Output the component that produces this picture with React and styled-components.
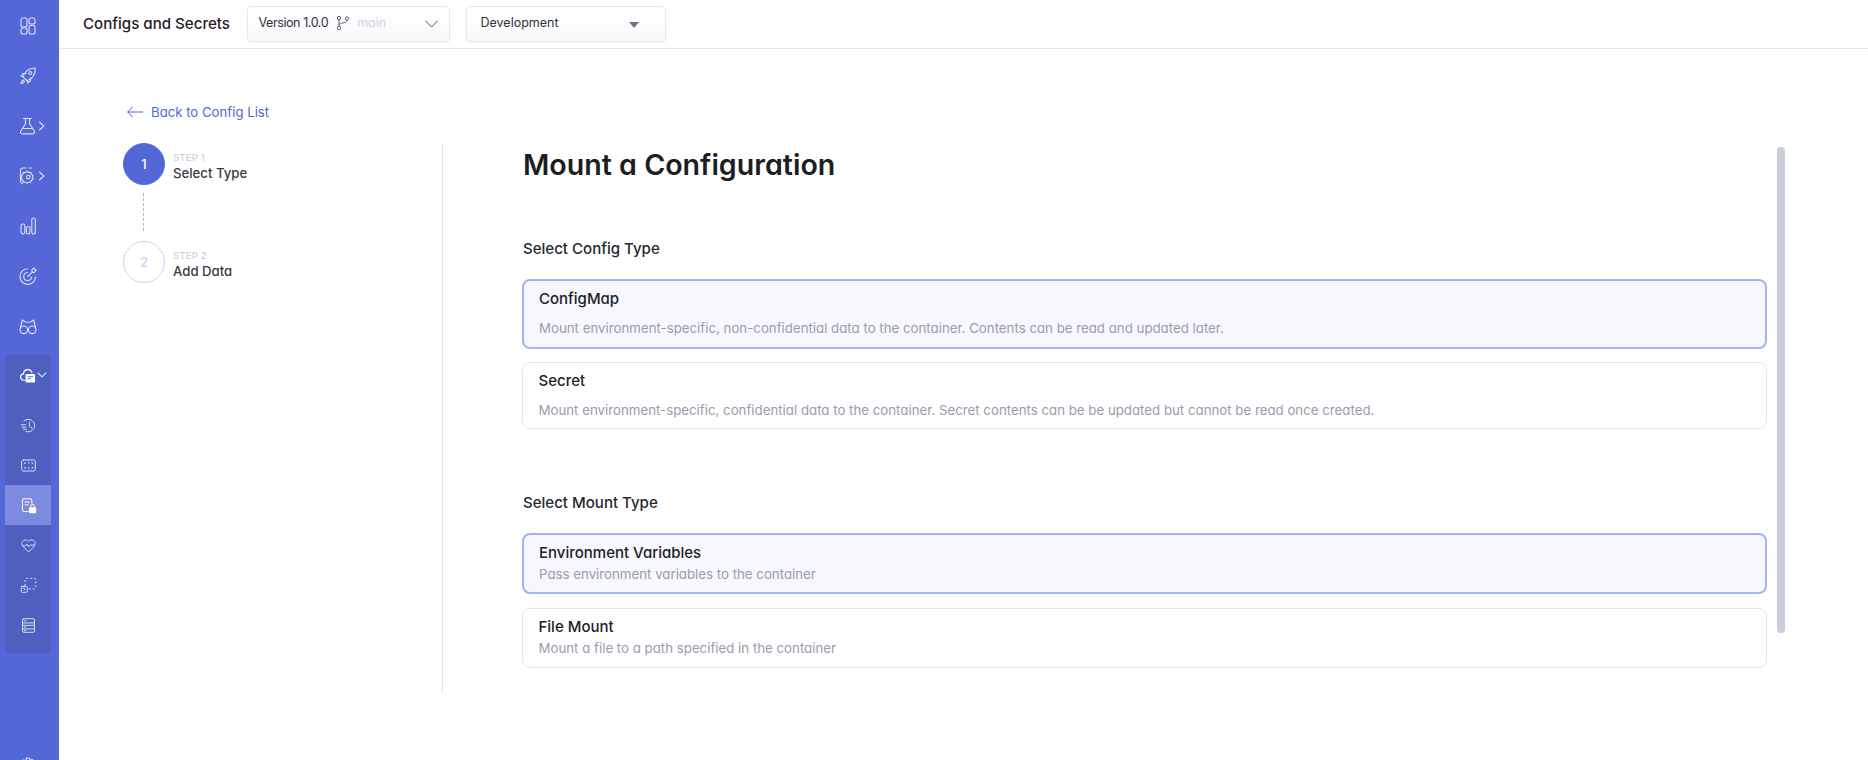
import React from 'react';
import styled, { createGlobalStyle } from 'styled-components';

const Global = createGlobalStyle`
  html, body { margin: 0; padding: 0; height: 100%; background: #fff; overflow: hidden; }
  #root { height: 100%; }
  * { box-sizing: border-box; }
  body {
    font-family: Inter, "Noto Sans", sans-serif;
    font-feature-settings: "cv11" 1;
    -webkit-font-smoothing: antialiased;
  }
`;

const Shell = styled.div`
  display: flex;
  width: 1868px;
  height: 760px;
  overflow: hidden;
`;

const Sidebar = styled.nav`
  width: 59px;
  flex: none;
  background: #5367d6;
  padding-top: 1px;
  display: flex;
  flex-direction: column;
  align-items: stretch;
  overflow: hidden;
`;

const NavRow = styled.div`
  height: 50px;
  flex: none;
  display: flex;
  align-items: center;
  justify-content: center;
  padding-right: 3px;
  position: relative;
`;

const NavCaret = styled.svg`
  position: absolute;
  left: 38px;
  top: 50%;
  transform: translateY(-50%);
  width: 8px;
  height: 10px;
`;

const NavGroup = styled.div`
  flex: none;
  margin: 4px 8px 0 5px;
  background: #4e5fc0;
  border-radius: 6px;
  padding-bottom: 8px;
`;

const GroupHead = styled.div`
  height: 40px;
  margin-bottom: 10px;
  display: flex;
  align-items: center;
  padding-left: 15px;
  position: relative;
`;

const GroupCaret = styled.svg`
  position: absolute;
  left: 32px;
  top: 50%;
  transform: translateY(-50%);
  width: 10px;
  height: 8px;
`;

const GroupRow = styled.div`
  height: 40px;
  display: flex;
  align-items: center;
  padding-left: 14.5px;
  background: ${p => (p.$active ? '#7c8adf' : 'transparent')};
`;

const Footer = styled.div`
  flex: none;
  margin-top: 103px;
  display: flex;
  justify-content: center;
  padding-right: 3px;
`;

const Main = styled.div`
  flex: 1;
  min-width: 0;
  display: flex;
  flex-direction: column;
`;

const Header = styled.header`
  height: 49px;
  flex: none;
  border-bottom: 1px solid #e8e9f2;
  display: flex;
  align-items: center;
  padding: 0 0 1px 24px;
`;

const PageName = styled.h1`
  margin: 0 16.5px 0 0;
  font-size: 15.1px;
  line-height: 20px;
  font-weight: 500;
  color: #1f2025;
`;

const Select = styled.div`
  width: ${p => p.$width}px;
  height: 36px;
  margin-right: 16px;
  border: 1px solid #e6e7f0;
  border-radius: 4px;
  background: linear-gradient(#ffffff, #f8f9fc);
  box-shadow: 0 1px 1px rgba(40, 50, 100, 0.05);
  display: flex;
  align-items: center;
  font-size: 12.5px;
  color: #30323a;
  position: relative;
  padding-left: ${p => p.$pad}px;
  padding-bottom: 2px;
`;

const VersionText = styled.span`
  letter-spacing: -0.42px;
`;

const MutedBranch = styled.span`
  color: #ccd0e2;
  margin-left: 7px;
`;

const BranchIcon = styled.svg`
  width: 14px;
  height: 16px;
  margin-left: 8px;
  flex: none;
`;

const SelectChevron = styled.svg`
  position: absolute;
  right: 11px;
  top: 13px;
  width: 13px;
  height: 8px;
`;

const SelectCaret = styled.div`
  position: absolute;
  right: 26px;
  top: 15px;
  width: 0;
  height: 0;
  border-left: 5.5px solid transparent;
  border-right: 5.5px solid transparent;
  border-top: 6px solid #6e7180;
`;

const Body = styled.main`
  flex: 1;
  padding: 53px 0 0 64px;
`;

const BackLink = styled.a`
  display: flex;
  align-items: center;
  height: 20px;
  margin-left: 4px;
  color: #5367d6;
  font-size: 13.2px;
  gap: 8px;
`;

const Wizard = styled.div`
  display: flex;
  margin-top: 21px;
  height: 550px;
`;

const StepColumn = styled.aside`
  width: 320px;
  flex: none;
  border-right: 1px solid #e3e4ec;
`;

const Step = styled.div`
  display: flex;
  align-items: center;
  gap: 8px;
`;

const Bullet = styled.div`
  width: 42px;
  height: 42px;
  border-radius: 50%;
  flex: none;
  display: flex;
  align-items: center;
  justify-content: center;
  font-size: 13px;
  font-weight: 500;
  background: ${p => (p.$on ? '#5367d6' : '#fff')};
  color: ${p => (p.$on ? '#fff' : '#ccd3f2')};
  border: 1px solid ${p => (p.$on ? '#5367d6' : '#ccd3f2')};
`;

const StepText = styled.div`
  display: flex;
  flex-direction: column;
  padding-top: 4px;
`;

const StepNo = styled.span`
  font-size: 9.5px;
  line-height: 13px;
  font-weight: 500;
  color: #cfd2de;
  letter-spacing: 0.2px;
`;

const StepName = styled.span`
  font-size: 13.2px;
  line-height: 18px;
  font-weight: 500;
  color: #3a3b44;
`;

const Dashes = styled.div`
  width: 1px;
  height: 38px;
  margin: 8px 0 10px 20px;
  border-left: 1px dashed #b9bac2;
`;

const Panel = styled.section`
  position: relative;
  width: 1343px;
  padding: 5px 19px 0 79px;
`;

const ScrollThumb = styled.div`
  position: absolute;
  right: 1px;
  top: 4px;
  width: 8px;
  height: 486px;
  border-radius: 4px;
  background: #c9cddc;
`;

const Title = styled.h2`
  margin: 0;
  padding-left: 1px;
  font-size: 28.6px;
  line-height: 34px;
  font-weight: 600;
  color: #1d1e22;
`;

const Label = styled.h3`
  margin: ${p => p.$top}px 0 20px;
  padding-left: 1px;
  font-size: 15.05px;
  line-height: 20px;
  font-weight: 500;
  color: #27282e;
`;

const Card = styled.div`
  height: ${p => p.$height}px;
  margin-top: ${p => p.$top}px;
  border-radius: 8px;
  border: ${p => (p.$on ? '2px solid #a3b2fb' : '1.5px solid #e6e7ec')};
  background: ${p => (p.$on ? '#f6f8fe' : '#fff')};
  padding: ${p => (p.$on ? '8px 15px' : '8px 15.5px')};
`;

const CardTitle = styled.div`
  font-size: 15px;
  line-height: 20px;
  font-weight: 500;
  color: #202126;
`;

const CardDesc = styled.div`
  margin-top: ${p => p.$gap}px;
  font-size: 13.27px;
  line-height: 18px;
  color: #9a9cad;
`;

const s = { fill: 'none', stroke: '#d9dEf7', strokeWidth: 1.15, strokeLinecap: 'round', strokeLinejoin: 'round' };

const Ico = ({ children, size = 20 }) => (
  <svg width={size} height={size} viewBox="0 0 20 20" {...s}>{children}</svg>
);

const Chev = () => (
  <NavCaret viewBox="0 0 8 10"><path d="M1.5 1 5.8 5 1.5 9" {...s} /></NavCaret>
);

export default function App() {
  return (
    <>
      <Global />
      <Shell>
        <Sidebar>
          <NavRow>
            <Ico>
              <rect x="3" y="2" width="6" height="9" rx="2" />
              <rect x="11" y="2" width="6" height="6" rx="2" />
              <rect x="3" y="12" width="6" height="6" rx="2" />
              <rect x="11" y="9.500" width="6" height="8.500" rx="2" />
            </Ico>
          </NavRow>
          <NavRow>
            <Ico>
              <path d="M7.500 13.300 5.200 11c1-4.500 5-8.500 12-9 .3 6.500-3.500 11-8 12.800z" />
              <circle cx="12.300" cy="7" r="1.500" />
              <path d="M5.500 10.500H3l2-3h3M9.500 14.500V17l3-2v-3" />
              <path d="M5 14c-1 .6-2 1.800-2 3.500 1.500 0 3-1 3.500-2z" />
            </Ico>
          </NavRow>
          <NavRow>
            <Ico>
              <path d="M5.500 2.500h8M7.500 2.500v5.300L2.800 15c-.8 1.500.2 2.800 1.800 2.800h10c1.600 0 2.500-1.400 1.700-2.800l-4.700-7.200V2.500" />
              <path d="M4.500 12.500h10" />
            </Ico>
            <Chev />
          </NavRow>
          <NavRow>
            <Ico>
              <path d="M8 2H5C3.500 2 2.500 3 2.500 4.500v10.500c0 1.300.8 2.500 2 2.800M11 2h2.500" />
              <path d="M11.500 6.500l1.500 1.300 2-.2.800 2 1.500 1-.7 2 .7 1.800-1.700 1.100-.8 2-2-.2-1.500 1.300-1.600-1.300-2 .2-.7-2-1.700-1.100.7-1.800-.7-2 1.700-1 .7-2 2 .2z" transform="translate(-2.200 -1.200)" />
              <circle cx="10.300" cy="11" r="1.800" />
            </Ico>
            <Chev />
          </NavRow>
          <NavRow>
            <Ico>
              <rect x="3" y="8" width="3.800" height="10" rx="1.900" />
              <rect x="8.500" y="10.500" width="3.500" height="7.500" rx="1.700" />
              <rect x="13.800" y="2" width="3.500" height="16" rx="1.700" />
            </Ico>
          </NavRow>
          <NavRow>
            <Ico>
              <path d="M9.500 2.800A7.800 7.800 0 1 0 17.500 11" />
              <path d="M9.500 6.500a4 4 0 1 0 4.200 4.500" />
              <path d="M9.800 10.500 14 6.300M14 6.300V3.500l2.300-1.500.4 1.700 1.700.4-2 2.200z" />
            </Ico>
          </NavRow>
          <NavRow>
            <Ico>
              <circle cx="5.800" cy="13.800" r="3.800" />
              <circle cx="14.200" cy="13.800" r="3.800" />
              <path d="M9.700 13c.3-.3.400-.3.600 0M2.300 12.500 4.300 4l3.200 2 2.500.3L12.500 6l3.200-2 2 8.500" />
            </Ico>
          </NavRow>
          <NavGroup>
            <GroupHead>
              <svg width="15.500" height="15" viewBox="0 0 19.500 19" fill="none">
                <path d="M6 15.500H5a4 4 0 0 1-.6-8A5.500 5.500 0 0 1 15 5.500" stroke="#fff" strokeWidth="1.500" strokeLinecap="round" />
                <rect x="7" y="7.500" width="12" height="11" rx="1.500" fill="#fff" />
                <path d="M9.500 11h7M9.500 13.500h4.500" stroke="#5367d6" strokeWidth="1.200" />
              </svg>
              <GroupCaret viewBox="0 0 10 8"><path d="M1 1.800 5 5.800 9 1.800" {...s} /></GroupCaret>
            </GroupHead>
            <GroupRow>
              <Ico size={17}>
                <path d="M4.500 4.800A7.400 7.400 0 1 1 7 17" />
                <path d="M11 6v5l3 1.800M1.500 9.200h5M2.500 12h4.500M4 14.500h3.500" />
              </Ico>
            </GroupRow>
            <GroupRow>
              <Ico size={17}>
                <rect x="2" y="3.500" width="16" height="13" rx="2" />
                <path d="M5.500 7.800V7h1M9.500 7h1.500M14 7h1v.8M5.500 12.200v.8h1M9.500 13h1.500M14 13h1v-.8" />
              </Ico>
            </GroupRow>
            <GroupRow $active>
              <svg width="17" height="17" viewBox="0 0 20 20" fill="none">
                <path d="M10 17H5c-1.100 0-2-.9-2-2V4c0-1.100.9-2 2-2h7c1.100 0 2 .9 2 2v4" stroke="#fff" strokeWidth="1.200" />
                <path d="M6 6h5M6 9h3.500" stroke="#fff" strokeWidth="1.200" strokeLinecap="round" />
                <rect x="10.500" y="12" width="8.500" height="7" rx="1" fill="#fff" />
                <path d="M12.700 12V10.800a2 2 0 0 1 4 0V12" stroke="#fff" strokeWidth="1.200" />
              </svg>
            </GroupRow>
            <GroupRow>
              <Ico size={17}>
                <path d="M10 17.500 3.500 11C1.200 8.500 2 4.800 4.800 3.800 6.800 3 8.800 3.700 10 5.200c1.200-1.500 3.200-2.200 5.200-1.400C18 4.800 18.800 8.500 16.500 11z" />
                <path d="M3.500 10.300h3.300l1.500-2 1.800 3.500 1.500-2.300h5" />
              </Ico>
            </GroupRow>
            <GroupRow>
              <Ico size={17}>
                <rect x="6" y="1.500" width="12.500" height="12.500" rx="1.500" strokeDasharray="2.400 2.200" strokeLinecap="butt" />
                <rect x="1.500" y="11" width="7" height="7" rx="1" fill="#4e5fc0" />
                <path d="M3.800 13.300h1.500v1.500" />
              </Ico>
            </GroupRow>
            <GroupRow>
              <Ico size={17}>
                <rect x="3" y="2" width="14" height="16" rx="1.500" />
                <path d="M3 7h14M3 9.800h14M3 14h14M5.200 4.500h1.800M5.200 11.800h1.800M5.200 16h1.800" />
              </Ico>
            </GroupRow>
          </NavGroup>
          <Footer>
            <Ico>
              <circle cx="10" cy="10" r="2.500" />
              <path d="M8.500 2h3l.5 2.500 2-1 2 2-1 2 2.500.5v3l-2.500.5 1 2-2 2-2-1-.5 2.500h-3l-.5-2.500-2 1-2-2 1-2L2 11.500v-3l2.500-.5-1-2 2-2 2 1z" />
            </Ico>
          </Footer>
        </Sidebar>
        <Main>
          <Header>
            <PageName>Configs and Secrets</PageName>
            <Select $width={203} $pad={11}>
              <VersionText>Version 1.0.0</VersionText>
              <BranchIcon viewBox="0 0 14 16" fill="none" stroke="#5d6070" strokeWidth="1">
                <circle cx="3" cy="3" r="1.700" />
                <circle cx="3" cy="13" r="1.700" />
                <circle cx="11" cy="3.500" r="1.700" />
                <path d="M3 4.700v6.600M11 5.200c0 3-8 2.500-8 5" />
              </BranchIcon>
              <MutedBranch>main</MutedBranch>
              <SelectChevron viewBox="0 0 13 8" fill="none" stroke="#50525e" strokeWidth="1">
                <path d="M.5.800 6.500 7l6-6.200" />
              </SelectChevron>
            </Select>
            <Select $width={200} $pad={14}>
              Development
              <SelectCaret />
            </Select>
          </Header>
          <Body>
            <BackLink>
              <svg width="16" height="12" viewBox="0 0 16 12" fill="none" stroke="#5367d6" strokeWidth="1" strokeLinecap="round" strokeLinejoin="round">
                <path d="M5.500 1 .8 6l4.700 5M.8 6H16" />
              </svg>
              Back to Config List
            </BackLink>
            <Wizard>
              <StepColumn>
                <Step>
                  <Bullet $on>1</Bullet>
                  <StepText>
                    <StepNo>STEP 1</StepNo>
                    <StepName>Select Type</StepName>
                  </StepText>
                </Step>
                <Dashes />
                <Step>
                  <Bullet>2</Bullet>
                  <StepText>
                    <StepNo>STEP 2</StepNo>
                    <StepName>Add Data</StepName>
                  </StepText>
                </Step>
              </StepColumn>
              <Panel>
                <ScrollThumb />
                <Title>Mount a Configuration</Title>
                <Label $top={57}>Select Config Type</Label>
                <Card $on $height={70} $top={0}>
                  <CardTitle>ConfigMap</CardTitle>
                  <CardDesc $gap={10}>Mount environment-specific, non-confidential data to the container. Contents can be read and updated later.</CardDesc>
                </Card>
                <Card $height={67} $top={13}>
                  <CardTitle>Secret</CardTitle>
                  <CardDesc $gap={9.5}>Mount environment-specific, confidential data to the container. Secret contents can be be updated but cannot be read once created.</CardDesc>
                </Card>
                <Label $top={64}>Select Mount Type</Label>
                <Card $on $height={61} $top={0}>
                  <CardTitle>Environment Variables</CardTitle>
                  <CardDesc $gap={2}>Pass environment variables to the container</CardDesc>
                </Card>
                <Card $height={60} $top={14}>
                  <CardTitle>File Mount</CardTitle>
                  <CardDesc $gap={1.5}>Mount a file to a path specified in the container</CardDesc>
                </Card>
              </Panel>
            </Wizard>
          </Body>
        </Main>
      </Shell>
    </>
  );
}
